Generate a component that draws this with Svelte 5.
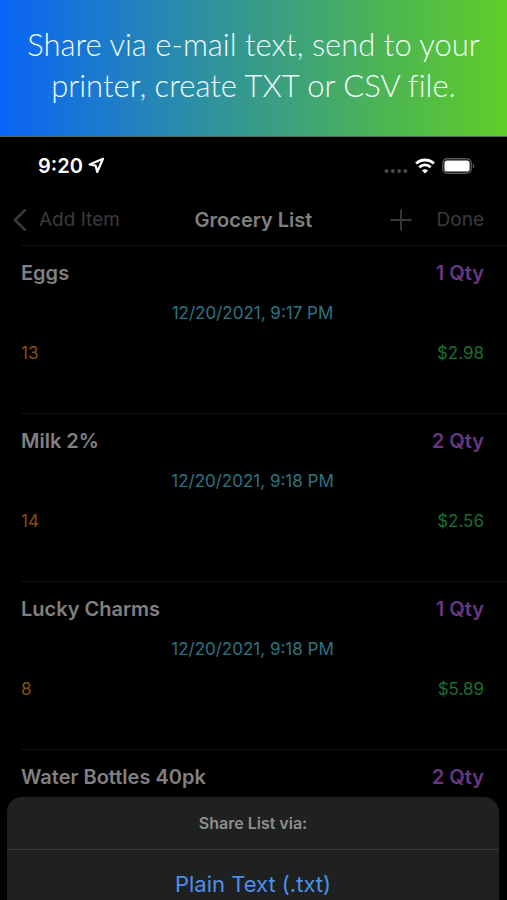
<script lang="ts">
	type Item = {
		name: string;
		qty: number;
		date: string;
		aisle: number;
		price: string;
	};

	const items: Item[] = [
		{ name: 'Eggs', qty: 1, date: '12/20/2021, 9:17 PM', aisle: 13, price: '$2.98' },
		{ name: 'Milk 2%', qty: 2, date: '12/20/2021, 9:18 PM', aisle: 14, price: '$2.56' },
		{ name: 'Lucky Charms', qty: 1, date: '12/20/2021, 9:18 PM', aisle: 8, price: '$5.89' },
		{ name: 'Water Bottles 40pk', qty: 2, date: '', aisle: 0, price: '' }
	];
</script>

<div class="screen">
	<header class="banner">
		<p>Share via e-mail text, send to your printer, create TXT or CSV file.</p>
	</header>

	<div class="status">
		<span class="time">9:20</span>
		<svg class="location" width="17" height="17" viewBox="0 0 17 17" aria-hidden="true">
			<path d="M15 1.8 1.6 7.4 7.6 8.6 9.2 15Z" fill="none" stroke="#fff" stroke-width="2.2" stroke-linejoin="round" />
		</svg>
		<div class="indicators">
			<svg width="24" height="20" viewBox="0 0 24 20" aria-hidden="true">
				<g fill="#48484a">
					<circle cx="2.5" cy="15" r="2" />
					<circle cx="8.8" cy="15" r="2" />
					<circle cx="15.1" cy="15" r="2" />
					<circle cx="21.4" cy="15" r="2" />
				</g>
			</svg>
			<svg width="20" height="16" viewBox="0 0 20 16" aria-hidden="true">
				<g fill="none" stroke="#fff" stroke-width="2.8">
					<path d="M1.1 5.6a12.8 12.8 0 0 1 17.8 0" />
					<path d="M4.3 9.3a8 8 0 0 1 11.4 0" />
				</g>
				<path d="M10 15.6 7 12.6a4.3 4.3 0 0 1 6 0Z" fill="#fff" />
			</svg>
			<svg width="33" height="16" viewBox="0 0 33 16" aria-hidden="true">
				<rect x="0.8" y="0.8" width="28.4" height="14.4" rx="4.4" fill="none" stroke="#58585a" stroke-width="1.4" />
				<rect x="2.4" y="2.4" width="25.2" height="11.2" rx="2.6" fill="#fff" />
				<path d="M30.8 5.6a2.6 2.6 0 0 1 0 4.8Z" fill="#58585a" />
			</svg>
		</div>
	</div>

	<nav class="navbar">
		<button class="back">
			<svg width="14" height="24" viewBox="0 0 14 24" aria-hidden="true">
				<path d="M12.4 1.6 2 12l10.4 10.4" fill="none" stroke="currentColor" stroke-width="2.6" />
			</svg>
			Add Item
		</button>
		<h1>Grocery List</h1>
		<div class="actions">
			<button aria-label="Add">
				<svg width="22" height="22" viewBox="0 0 22 22" aria-hidden="true">
					<path d="M11 0.5v21M0.5 11h21" stroke="currentColor" stroke-width="1.8" />
				</svg>
			</button>
			<button>Done</button>
		</div>
	</nav>

	<ul class="list">
		{#each items as item}
			<li>
				<div class="line title">
					<span>{item.name}</span>
					<span class="qty">{item.qty} Qty</span>
				</div>
				{#if item.date}
					<div class="line date">{item.date}</div>
					<div class="line">
						<span class="aisle">{item.aisle}</span>
						<span class="price">{item.price}</span>
					</div>
				{/if}
			</li>
		{/each}
	</ul>

	<div class="sheet" role="dialog" aria-labelledby="sheet-title">
		<h2 id="sheet-title">Share List via:</h2>
		<button>Plain Text (.txt)</button>
	</div>
</div>

<style>
	:global(body) {
		background: #000;
	}

	.screen {
		position: relative;
		height: 100vh;
		overflow: hidden;
		background: #000;
		font-family: Inter, 'Liberation Sans', sans-serif;
		color: #808080;
	}

	button {
		padding: 0;
		border: 0;
		background: none;
		color: inherit;
		font: inherit;
		cursor: pointer;
	}

	svg {
		display: block;
		flex: none;
	}

	.banner {
		padding: 24px 16px 30px;
		border-bottom: 1px solid #4a6a6a;
		background: linear-gradient(90deg, #0a64f8, #2a8caa 36%, #4cb455 75%, #5fce28);
		color: #f2fbff;
		font-family: Lato, sans-serif;
		font-size: 31px;
		font-weight: 300;
		font-variant-ligatures: none;
		line-height: 41px;
		text-align: center;
	}

	.banner p {
		margin: 0;
	}

	.status {
		display: flex;
		align-items: center;
		height: 57px;
		padding: 0 32px 0 38px;
		color: #fff;
	}

	.time {
		font-size: 20px;
		font-weight: 600;
	}

	.location {
		margin-left: 5px;
	}

	.indicators {
		display: flex;
		align-items: center;
		gap: 7px;
		margin-left: auto;
	}

	.navbar {
		display: grid;
		grid-template-columns: 1fr auto 1fr;
		align-items: center;
		height: 51px;
		padding: 0 13px;
		color: #3b3b3b;
		font-size: 19px;
	}

	.back {
		display: flex;
		align-items: center;
		gap: 12px;
	}

	h1 {
		margin: 0;
		color: #808080;
		font-size: 20px;
		font-weight: 600;
	}

	.actions {
		display: flex;
		align-items: center;
		justify-content: flex-end;
		gap: 25px;
		padding-right: 10px;
	}

	.list {
		margin: 0;
		padding: 0 0 0 20px;
		list-style: none;
	}

	.list li {
		box-sizing: border-box;
		min-height: 168px;
		padding: 7px 23px 0 1px;
		border-top: 1px solid #111;
	}

	.line {
		display: flex;
		justify-content: space-between;
		font-size: 17px;
		line-height: 40px;
	}

	.title {
		font-size: 20px;
		font-weight: 600;
	}

	.qty {
		color: #6b3484;
	}

	.date {
		justify-content: center;
		color: #2b7482;
	}

	.aisle {
		color: #855308;
	}

	.price {
		color: #17702d;
	}

	.sheet {
		position: absolute;
		right: 8px;
		bottom: 0;
		left: 7px;
		height: 103px;
		overflow: hidden;
		border-radius: 15px 15px 0 0;
		background: #1f2020;
		text-align: center;
	}

	.sheet h2 {
		margin: 0;
		border-bottom: 1px solid #363737;
		color: #8e8f8f;
		font-size: 16px;
		font-weight: 600;
		line-height: 52px;
	}

	.sheet button {
		width: 100%;
		color: #4c90ec;
		font-size: 22px;
		line-height: 68px;
	}
</style>
